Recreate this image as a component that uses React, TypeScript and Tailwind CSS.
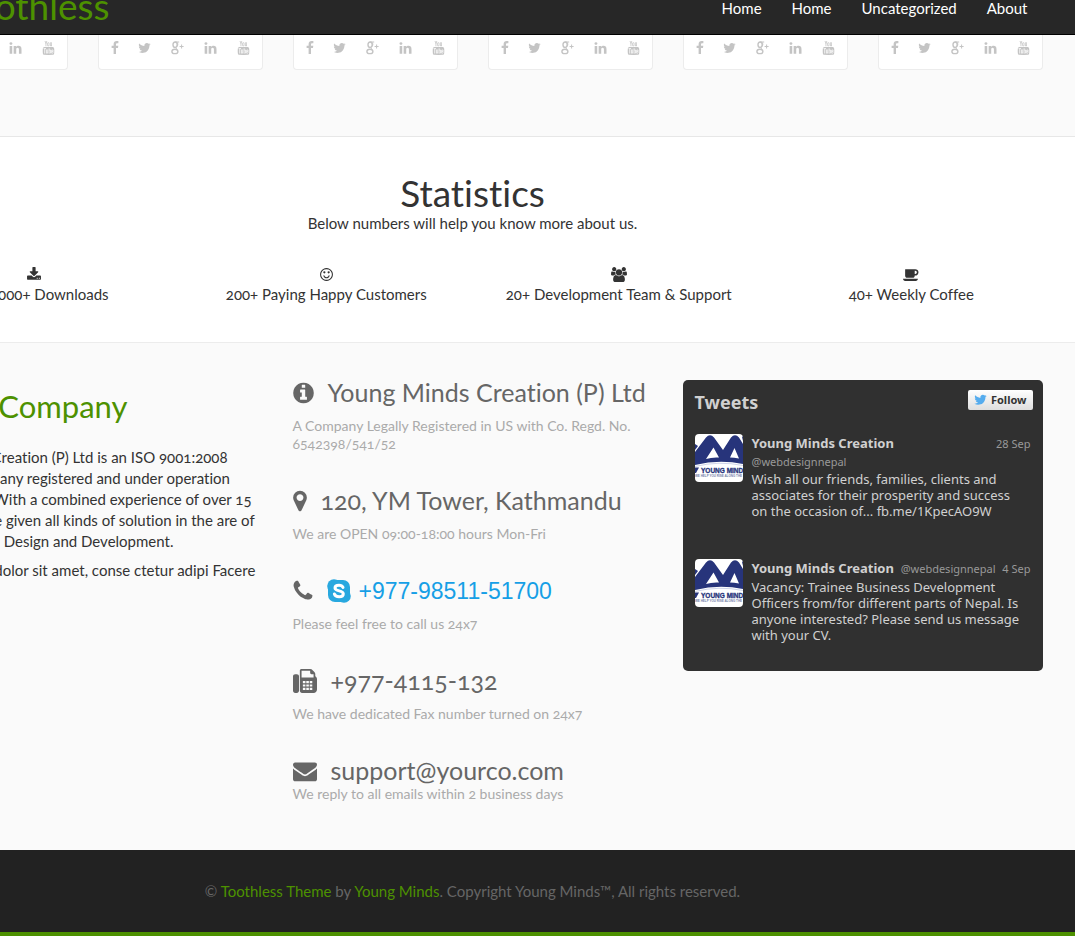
import type { ReactNode } from "react";

type GlyphProps = { d: string; box: string; className: string };

function Glyph({ d, box, className }: GlyphProps) {
  return (
    <svg viewBox={box} className={className} fill="currentColor" fillRule="evenodd" aria-hidden="true">
      <path d={d} />
    </svg>
  );
}

const PATHS = {
  facebook:
    "M1343 12v264h-157q-86 0-116 36t-30 108v189h293l-39 296h-254v759h-306v-759h-255v-296h255v-218q0-186 104-288.500t277-102.500q147 0 228 12z",
  twitter:
    "M1684 408q-67 98-162 167 1 14 1 42 0 130-38 259.500t-115.500 248.500-184.500 210.500-258 146-323 54.500q-271 0-496-145 35 4 78 4 225 0 401-138-105-2-188-64.500t-114-159.500q33 5 61 5 43 0 85-11-112-23-185.500-111.500t-73.500-205.500v-4q68 38 146 41-66-44-105-115t-39-154q0-88 44-163 121 149 294.500 238.500t371.500 99.500q-8-38-8-74 0-134 94.500-228.500t228.500-94.500q140 0 236 102 109-21 205-78-37 115-142 178 93-10 186-50z",
  linkedin:
    "M477 625v991h-330v-991h330zm21-306q1 73-50.500 122t-135.500 49h-2q-82 0-132-49t-50-122q0-74 51.500-122.500t134.500-48.500 133 48.500 51 122.500zm1166 729v568h-329v-530q0-105-40.500-164.500t-126.500-59.500q-63 0-105.500 34.500t-63.500 85.500q-11 30-11 81v553h-329q2-399 2-647t-1-296l-1-48h329v144h-2q20-32 41-56t56.500-52 87-43.500 114.500-15.500q171 0 275 113.500t104 332.500z",
  youtube:
    "M1099 1244v211q0 67-39 67-23 0-45-22v-301q22-22 45-22 39 0 39 67zm338 1v46h-90v-46q0-68 45-68t45 68zm-966-218h107v-94h-312v94h105v569h100v-569zm288 569h89v-494h-89v378q-30 42-57 42-18 0-21-21-1-3-1-35v-364h-89v391q0 49 8 73 12 37 58 37 48 0 102-61v54zm429-148v-197q0-73-9-99-17-56-71-56-50 0-93 54v-217h-89v663h89v-48q45 55 93 55 54 0 71-55 9-27 9-100zm338-10v-13h-91q0 51-2 61-7 36-40 36-46 0-46-69v-87h179v-103q0-79-27-116-39-51-106-51-68 0-107 51-28 37-28 116v173q0 79 29 116 39 51 108 51 72 0 108-53 18-27 21-54 2-9 2-58zm-608-913v-210q0-69-43-69t-43 69v210q0 70 43 70t43-70zm719 751q0 234-26 350-14 59-58 99t-102 46q-184 21-555 21t-555-21q-58-6-102.500-46t-57.500-99q-26-112-26-350 0-234 26-350 14-59 58-99t103-47q183-20 554-20t555 20q58 7 102.500 47t57.500 99q26 112 26 350zm-998-1276h102l-121 399v271h-100v-271q-14-74-61-212-37-103-65-187h106l71 263zm370 333v175q0 81-28 118-38 51-106 51-67 0-105-51-28-38-28-118v-175q0-80 28-117 38-51 105-51 68 0 106 51 28 37 28 117zm335-162v499h-91v-55q-53 62-103 62-46 0-59-37-8-24-8-75v-394h91v367q0 33 1 35 3 22 21 22 27 0 57-43v-381h91z",
  download:
    "M1344 1344q0-26-19-45t-45-19-45 19-19 45 19 45 45 19 45-19 19-45zm256 0q0-26-19-45t-45-19-45 19-19 45 19 45 45 19 45-19 19-45zm128-224v320q0 40-28 68t-68 28h-1472q-40 0-68-28t-28-68v-320q0-40 28-68t68-28h465l135 136q58 56 136 56t136-56l136-136h464q40 0 68 28t28 68zm-325-569q17 41-14 70l-448 448q-18 19-45 19t-45-19l-448-448q-31-29-14-70 17-39 59-39h256v-448q0-26 19-45t45-19h256q26 0 45 19t19 45v448h256q42 0 59 39z",
  smile:
    "M1262 1075q-37 121-138 195t-228 74-228-74-138-195q-8-25 4-48.500t38-31.500q25-8 48.500 4t31.500 38q25 80 92.500 129.500t151.500 49.500 151.500-49.500 92.500-129.500q8-26 32-38t49-4 37 31.500 4 48.500zm-494-435q0 53-37.500 90.500t-90.500 37.500-90.500-37.500-37.500-90.500 37.500-90.500 90.500-37.500 90.500 37.500 37.500 90.500zm512 0q0 53-37.500 90.500t-90.500 37.500-90.500-37.500-37.500-90.500 37.500-90.500 90.500-37.500 90.500 37.500 37.500 90.500zm256 256q0-130-51-248.500t-136.500-204-204-136.500-248.500-51-248.500 51-204 136.500-136.500 204-51 248.500 51 248.500 136.500 204 204 136.500 248.500 51 248.500-51 204-136.500 136.500-204 51-248.500zm128 0q0 209-103 385.500t-279.500 279.500-385.500 103-385.500-103-279.500-279.500-103-385.500 103-385.500 279.500-279.500 385.500-103 385.500 103 279.500 279.500 103 385.500z",
  users:
    "M529 896q-162 5-265 128h-134q-82 0-138-40.500t-56-118.500q0-353 124-353 6 0 43.500 21t97.500 42.500 119 21.500q67 0 133-23-5 37-5 66 0 139 81 256zm1071 637q0 120-73 189.500t-194 69.500h-874q-121 0-194-69.500t-73-189.500q0-53 3.500-103.500t14-109 26.500-108.500 43-97.500 62-81 85.500-53.500 111.500-20q10 0 43 21.500t73 48 107 48 135 21.500 135-21.500 107-48 73-48 43-21.500q61 0 111.500 20t85.500 53.500 62 81 43 97.500 26.500 108.500 14 109 3.500 103.500zm-1024-1277q0 106-75 181t-181 75-181-75-75-181 75-181 181-75 181 75 75 181zm704 384q0 159-112.500 271.500t-271.500 112.500-271.500-112.500-112.500-271.500 112.500-271.500 271.500-112.500 271.500 112.500 112.500 271.500zm576 225q0 78-56 118.500t-138 40.500h-134q-103-123-265-128 81-117 81-256 0-29-5-66 66 23 133 23 59 0 119-21.500t97.500-42.500 43.500-21q124 0 124 353zm-128-609q0 106-75 181t-181 75-181-75-75-181 75-181 181-75 181 75 75 181z",
  coffee:
    "M1664 640q0-80-56-136t-136-56h-64v384h64q80 0 136-56t56-136zm-1664 768h1792q0 106-75 181t-181 75h-1280q-106 0-181-75t-75-181zm1856-768q0 159-112.500 271.500t-271.500 112.500h-64v32q0 92-66 158t-158 66h-704q-92 0-158-66t-66-158v-736q0-26 19-45t45-19h1152q159 0 271.500 112.500t112.500 271.500z",
  info:
    "M1152 1376v-160q0-14-9-23t-23-9h-96v-512q0-14-9-23t-23-9h-320q-14 0-23 9t-9 23v160q0 14 9 23t23 9h96v320h-96q-14 0-23 9t-9 23v160q0 14 9 23t23 9h448q14 0 23-9t9-23zm-128-896v-160q0-14-9-23t-23-9h-192q-14 0-23 9t-9 23v160q0 14 9 23t23 9h192q14 0 23-9t9-23zm640 416q0 209-103 385.500t-279.500 279.500-385.500 103-385.500-103-279.500-279.500-103-385.500 103-385.500 279.500-279.500 385.500-103 385.500 103 279.500 279.500 103 385.500z",
  marker:
    "M1152 640q0-106-75-181t-181-75-181 75-75 181 75 181 181 75 181-75 75-181zm256 0q0 109-33 179l-364 774q-16 33-47.500 52t-67.500 19-67.500-19-46.500-52l-365-774q-33-70-33-179 0-212 150-362t362-150 362 150 150 362z",
  phone:
    "M1600 1240q0 27-10 70.500t-21 68.500q-21 50-122 106-94 51-186 51-27 0-52.500-3.500t-57.500-12.500-47.500-14.500-55.500-20.500-49-18q-98-35-175-83-128-79-264.500-215.500t-215.500-264.500q-48-77-83-175-3-9-18-49t-20.500-55.500-14.500-47.500-12.500-57.500-3.500-52.500q0-92 51-186 56-101 106-122 25-11 68.500-21t70.500-10q14 0 21 3 18 6 53 76 11 19 30 54t35 63.500 31 53.500q3 4 17.500 25t21.500 35.500 7 28.500q0 20-28.500 50t-62 55-62 53-28.500 46q0 9 5 22.500t8.500 20.500 14 24 11.500 19q76 137 174 235t235 174q2 1 19 11.500t24 14 20.500 8.500 22.500 5q18 0 46-28.500t53-62 55-62 50-28.500q14 0 28.500 7t35.500 21.500 25 17.500q25 15 53.500 31t63.500 35 54 30q70 35 76 53 3 7 3 21z",
  fax:
    "M288 384q66 0 113 47t47 113v1088q0 66-47 113t-113 47h-128q-66 0-113-47t-47-113v-1088q0-66 47-113t113-47h128zm1376 163q58 34 93 93t35 128v768q0 106-75 181t-181 75h-864q-66 0-113-47t-47-113v-1536q0-40 28-68t68-28h672q40 0 88 20t76 48l152 152q28 28 48 76t20 88v163zM736 896h192v160h-192zM992 896h192v160h-192zM1248 896h192v160h-192zM736 1152h192v160h-192zM992 1152h192v160h-192zM1248 1152h192v160h-192zM736 1408h192v160h-192zM992 1408h192v160h-192zM1248 1408h192v160h-192zM1536 640v-256h-160q-40 0-68-28t-28-68v-160h-640v512z",
  envelope:
    "M1792 710v794q0 66-47 113t-113 47h-1472q-66 0-113-47t-47-113v-794q44 49 101 87 362 246 497 345 57 42 92.500 65.500t94.500 48 110 24.500h2q51 0 110-24.500t94.500-48 92.500-65.500q170-123 498-345 57-39 100-87zm0-294q0 79-49 151t-122 123q-376 261-468 325-10 7-42.500 31t-54 38.500-52 32.500-57.500 27-50 9h-2q-23 0-50-9t-57.500-27-52-32.500-54-38.500-42.500-31q-91-64-262-182.500t-205-142.500q-62-42-117-115.500t-55-136.500q0-78 41.500-130t118.500-52h1472q65 0 112.500 47t47.500 113z",
};

function GooglePlus() {
  return (
    <svg viewBox="0 0 13 14" className="h-3.5 w-[13px]" fill="none" stroke="currentColor" aria-hidden="true">
      <ellipse cx="4.1" cy="3.7" rx="2.1" ry="2.7" strokeWidth="1.4" />
      <path d="M4.2 1h4M6 1.4C7 2.2 7.2 4.6 5.6 5.8 4.4 6.8 5 7.4 6 8.2" strokeWidth="1" />
      <ellipse cx="3.9" cy="10.4" rx="3" ry="2.2" strokeWidth="1.4" />
      <path d="M8.6 5.5h4M10.6 3.5v4" strokeWidth="1" />
    </svg>
  );
}

function Skype() {
  return (
    <svg viewBox="0 0 24 24" className="size-6 shrink-0" aria-hidden="true">
      <rect x="1" y="1" width="22" height="22" rx="7" fill="#28a8df" />
      <circle cx="7" cy="7" r="6.8" fill="#28a8df" />
      <circle cx="17" cy="17" r="6.8" fill="#28a8df" />
      <path
        d="M16 8.400C15.300 6.900 13.800 6.300 12 6.300c-2.200 0-4 .9-4 2.700 0 3.800 8.300 1.900 8.300 5.700 0 2-2 3-4.200 3-2.300 0-4.100-.9-4.700-2.700"
        fill="none"
        stroke="#fff"
        strokeWidth="3"
        strokeLinecap="round"
      />
    </svg>
  );
}

function SocialCard() {
  return (
    <div className="flex h-[35px] items-start justify-between rounded-b-sm border border-t-0 border-[#ececec] bg-white px-3 pt-[6px] text-[#c4c4c4]">
      <a href="#facebook" aria-label="Facebook">
        <Glyph d={PATHS.facebook} box="400 0 1024 1792" className="h-3.5 w-2" />
      </a>
      <a href="#twitter" aria-label="Twitter">
        <Glyph d={PATHS.twitter} box="64 0 1664 1792" className="h-3.5 w-[13px]" />
      </a>
      <a href="#google" aria-label="Google Plus">
        <GooglePlus />
      </a>
      <a href="#linkedin" aria-label="LinkedIn">
        <Glyph d={PATHS.linkedin} box="96 0 1600 1792" className="h-3.5 w-[13px]" />
      </a>
      <a href="#youtube" aria-label="YouTube">
        <Glyph d={PATHS.youtube} box="128 0 1536 1792" className="h-3.5 w-[13px]" />
      </a>
    </div>
  );
}

function Stat({ icon, children }: { icon: ReactNode; children: ReactNode }) {
  return (
    <li className="flex flex-col items-center whitespace-nowrap">
      {icon}
      <span className="mt-0.5 leading-5">{children}</span>
    </li>
  );
}

type ContactProps = { icon: ReactNode; title: ReactNode; note: string; tight?: boolean };

function Contact({ icon, title, note, tight }: ContactProps) {
  return (
    <div className="mb-[35px]">
      <h3 className="flex h-[26px] items-center gap-3.5 text-[25px] whitespace-nowrap text-[#666]">
        {icon}
        {title}
      </h3>
      <p className={`${tight ? "mt-px" : "mt-[11px]"} text-sm leading-[18px] text-[#aaa]`}>{note}</p>
    </div>
  );
}

function Avatar() {
  return (
    <svg viewBox="0 0 48 48" className="size-12 shrink-0 rounded" role="img" aria-label="Young Minds logo">
      <rect width="48" height="48" fill="#fff" />
      <path
        d="M0 18L11 3.500Q15-1 19 3.500L28 16 36 3.500Q40-1 44 3.500L48 10V30Q24 25 0 31zM0 10l3 2-3 4zM47 3l1-1v5z"
        fill="#27347b"
      />
      <path d="M18.500 13.500L24 23.500Q17 23 11 25zM39.500 14l4.500 10.500q-5-1-9-1z" fill="#fff" />
      <path d="M0 32.500Q24 26.500 48 31.500" fill="none" stroke="#c3c9e2" strokeWidth="0.800" />
      <path d="M0 33.500h4L1 39H0z" fill="#27347b" />
      <text
        x="6"
        y="38.500"
        fontSize="6.500"
        fontWeight="900"
        fontFamily="'Liberation Sans', sans-serif"
        fill="#27347b"
        stroke="#27347b"
        strokeWidth="0.300"
      >
        YOUNG MIND
      </text>
      <text x="0" y="43" fontSize="3" fontWeight="700" fontFamily="'Liberation Sans', sans-serif" fill="#777fa8">
        WE HELP YOU RISE ALONG THE
      </text>
    </svg>
  );
}

export default function App() {
  return (
    <div className="overflow-x-hidden bg-[#fafafa] font-['Lato',sans-serif] text-[15px] text-[#333] oldstyle-nums [font-variant-ligatures:no-common-ligatures]">
      <div className="-ml-[130px]">
        <header className="h-[35px] overflow-hidden border-b border-black bg-[#272727]">
          <div className="mx-auto flex max-w-[1170px] items-start justify-between px-[15px]">
            <a href="#home" className="-mt-3.5 w-[207px] text-right text-[37px] leading-10 text-[#4d9100]">
              Toothless
            </a>
            <nav className="flex gap-[30px] pr-[15px] leading-4 text-white">
              <a href="#home">Home</a>
              <a href="#main">Home</a>
              <a href="#uncategorized">Uncategorized</a>
              <a href="#about">About</a>
            </nav>
          </div>
        </header>

        <section className="border-b border-[#e7e7e7] pb-[66px]" aria-label="Team">
          <div className="mx-auto grid max-w-[1170px] grid-cols-6 gap-[30px] px-[15px]">
            {[0, 1, 2, 3, 4, 5].map((n) => (
              <SocialCard key={n} />
            ))}
          </div>
        </section>

        <section className="border-b border-[#ececec] bg-white pt-9 pb-[38px]">
          <h2 className="text-center text-[37px] leading-10">Statistics</h2>
          <p className="text-center leading-5">Below numbers will help you know more about us.</p>
          <ul className="mx-auto mt-[34px] grid max-w-[1170px] grid-cols-4">
            <Stat icon={<Glyph d={PATHS.download} box="64 0 1664 1792" className="h-[15px] w-3.5" />}>
              1,000,000+ Downloads
            </Stat>
            <Stat icon={<Glyph d={PATHS.smile} box="128 0 1536 1792" className="h-[15px] w-[13px]" />}>
              200+ Paying Happy Customers
            </Stat>
            <Stat icon={<Glyph d={PATHS.users} box="-64 0 1920 1792" className="h-[15px] w-4" />}>
              20+ Development Team &amp; Support
            </Stat>
            <Stat icon={<Glyph d={PATHS.coffee} box="0 0 1920 1792" className="h-[15px] w-4" />}>
              40+ Weekly Coffee
            </Stat>
          </ul>
        </section>

        <section className="mx-auto grid max-w-[1170px] grid-cols-3 gap-[30px] px-[15px] pt-[37px] pb-3">
          <div className="whitespace-nowrap">
            <h2 className="mt-2 w-[225px] text-right text-[31px] leading-9 text-[#4d9100]">About Company</h2>
            <p className="mt-[23px] leading-[21px]">
              Young Minds Creation (P) Ltd is an ISO 9001:2008
              <br />
              Certified company registered and under operation
              <br />
              across Nepal. With a combined experience of over 15
              <br />
              years. We have given all kinds of solution in the are of
              <br />
              Software, Web Design and Development.
            </p>
            <p className="mt-2 leading-[21px]">Lorem Ipsum, dolor sit amet, conse ctetur adipi Facere</p>
          </div>

          <div>
            <Contact
              icon={<Glyph d={PATHS.info} box="128 0 1536 1792" className="h-6 w-[21px]" />}
              title="Young Minds Creation (P) Ltd"
              note="A Company Legally Registered in US with Co. Regd. No. 6542398/541/52"
            />
            <Contact
              icon={<Glyph d={PATHS.marker} box="384 0 1024 1792" className="h-6 w-3.5" />}
              title="120, YM Tower, Kathmandu"
              note="We are OPEN 09:00-18:00 hours Mon-Fri"
            />
            <Contact
              icon={<Glyph d={PATHS.phone} box="192 0 1408 1792" className="h-6 w-5" />}
              title={
                <a
                  href="tel:+9779851151700"
                  className="flex items-center gap-2 font-['Liberation_Sans',sans-serif] text-[23px] text-[#169fe6]"
                >
                  <Skype />
                  +977-98511-51700
                </a>
              }
              note="Please feel free to call us 24x7"
            />
            <Contact
              icon={<Glyph d={PATHS.fax} box="0 0 1792 1792" className="size-6" />}
              title="+977-4115-132"
              note="We have dedicated Fax number turned on 24x7"
            />
            <Contact
              icon={<Glyph d={PATHS.envelope} box="0 0 1792 1792" className="size-6" />}
              title="support@yourco.com"
              note="We reply to all emails within 2 business days"
              tight
            />
          </div>

          <aside className="self-start rounded-[5px] bg-[#303030] px-3 pb-7 font-['Noto_Sans',sans-serif] text-[13px] leading-4 text-[#d0d0d0] lining-nums">
            <div className="flex items-start justify-between pt-2.5">
              <h2 className="text-lg leading-6 font-bold">Tweets</h2>
              <button
                type="button"
                className="-mr-0.5 flex h-5 items-center gap-1 rounded-xs bg-linear-to-b from-white to-[#dedede] px-1.5 text-[11px] font-bold text-[#333]"
              >
                <Glyph d={PATHS.twitter} box="64 200 1664 1450" className="h-3 w-[13px] text-[#55acee]" />
                Follow
              </button>
            </div>
            <article className="mt-5 flex gap-[9px]">
              <Avatar />
              <div className="min-w-0 flex-1">
                <div className="flex items-baseline justify-between leading-[19px]">
                  <strong>Young Minds Creation</strong>
                  <time className="text-[11px] text-[#999]">28 Sep</time>
                </div>
                <div className="text-[11px] leading-[18px] text-[#999]">@webdesignnepal</div>
                <p>
                  Wish all our friends, families, clients and
                  <br />
                  associates for their prosperity and success
                  <br />
                  on the occasion of... fb.me/1KpecAO9W
                </p>
              </div>
            </article>
            <article className="mt-10 flex gap-[9px]">
              <Avatar />
              <div className="min-w-0 flex-1">
                <div className="flex items-baseline justify-between leading-[19px] whitespace-nowrap">
                  <strong>Young Minds Creation</strong>
                  <span className="text-[11px] text-[#999]">@webdesignnepal</span>
                  <time className="text-[11px] text-[#999]">4 Sep</time>
                </div>
                <p className="mt-px">
                  Vacancy: Trainee Business Development
                  <br />
                  Officers from/for different parts of Nepal. Is
                  <br />
                  anyone interested? Please send us message
                  <br />
                  with your CV.
                </p>
              </div>
            </article>
          </aside>
        </section>

        <footer className="border-b-4 border-[#4d9100] bg-[#222] py-8 text-center leading-[18px] text-[#666]">
          © <a href="#theme" className="text-[#4d9100]">Toothless Theme</a> by{" "}
          <a href="#young-minds" className="text-[#4d9100]">Young Minds</a>. Copyright Young Minds™, All rights
          reserved.
        </footer>
      </div>
    </div>
  );
}
